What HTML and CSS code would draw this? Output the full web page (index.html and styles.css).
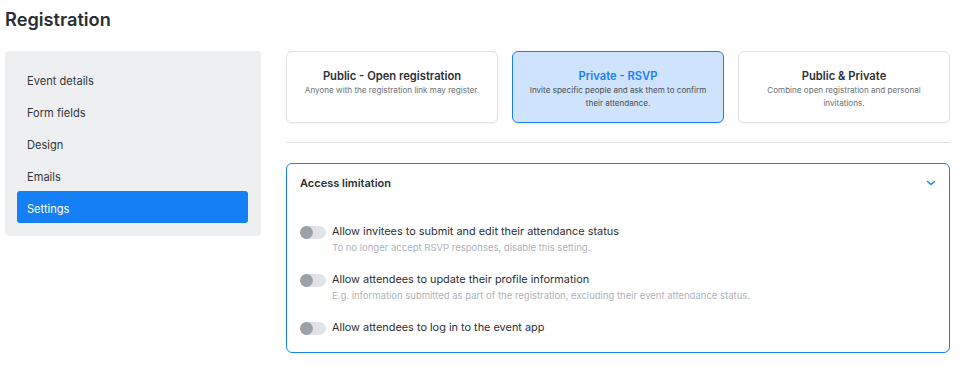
FILE: index.html
```html
<!DOCTYPE html>
<html>
<head>
<meta charset="utf-8">
<link rel="stylesheet" href="styles.css">
</head>
<body>
<h1 class="page-title">Registration</h1>
<div class="layout">
  <nav class="sidebar">
    <div class="nav-item">Event details</div>
    <div class="nav-item">Form fields</div>
    <div class="nav-item">Design</div>
    <div class="nav-item">Emails</div>
    <div class="nav-item active">Settings</div>
  </nav>
  <main class="content">
    <div class="cards">
      <div class="card">
        <div class="card-title">Public - Open registration</div>
        <div class="card-sub">Anyone with the registration link may register.</div>
      </div>
      <div class="card selected">
        <div class="card-title">Private - RSVP</div>
        <div class="card-sub">Invite specific people and ask them to confirm their attendance.</div>
      </div>
      <div class="card">
        <div class="card-title">Public &amp; Private</div>
        <div class="card-sub">Combine open registration and personal invitations.</div>
      </div>
    </div>
    <hr class="divider">
    <section class="panel">
      <div class="panel-header">
        <span>Access limitation</span>
        <svg class="chevron" width="10" height="6" viewBox="0 0 10 6"><path d="M1.5 1.5 L5 4.5 L8.5 1.5" fill="none" stroke="#1a7ff5" stroke-width="1.4" stroke-linecap="round" stroke-linejoin="round"/></svg>
      </div>
      <div class="panel-body">
        <div class="setting">
          <span class="toggle"><span class="knob"></span></span>
          <div class="setting-text">
            <div class="setting-label">Allow invitees to submit and edit their attendance status</div>
            <div class="setting-sub">To no longer accept RSVP responses, disable this setting.</div>
          </div>
        </div>
        <div class="setting">
          <span class="toggle"><span class="knob"></span></span>
          <div class="setting-text">
            <div class="setting-label">Allow attendees to update their profile information</div>
            <div class="setting-sub">E.g. information submitted as part of the registration, excluding their event attendance status.</div>
          </div>
        </div>
        <div class="setting">
          <span class="toggle"><span class="knob"></span></span>
          <div class="setting-text">
            <div class="setting-label">Allow attendees to log in to the event app</div>
          </div>
        </div>
      </div>
    </section>
  </main>
</div>
</body>
</html>
```
FILE: styles.css
```css
* { box-sizing: border-box; }
body {
  margin: 0;
  padding: 0 13px 0 5px;
  font-family: Inter, "Noto Sans", "Liberation Sans", sans-serif;
  color: #2c3035;
  background: #fff;
}
.page-title {
  margin: 0;
  height: 51px;
  padding-top: 8px;
  font-size: 18.2px;
  line-height: 22px;
  font-weight: 600;
  color: #2a2e33;
}
.layout {
  display: flex;
  align-items: flex-start;
  gap: 25px;
}
.sidebar {
  width: 256px;
  flex: none;
  background: #eeeff1;
  border-radius: 4px;
  padding: 12px 13px 13px 12px;
}
.nav-item {
  height: 32px;
  line-height: 28px;
  padding: 4px 0 0 10px;
  font-size: 11.1px;
  color: #33373c;
  border-radius: 3px;
}
.nav-item.active {
  background: #1580f6;
  color: #fff;
}
.content {
  flex: 1;
  min-width: 0;
}
.cards {
  display: grid;
  grid-template-columns: repeat(3, 1fr);
  gap: 14px;
}
.card {
  height: 72px;
  border: 1px solid #e2e3e6;
  border-radius: 6px;
  box-shadow: 0 1px 2px rgba(0,0,0,0.06);
  padding: 16px 16px 0;
  text-align: center;
  background: #fff;
}
.card.selected {
  background: #cfe3fc;
  border-color: #1a7ff5;
}
.card-title {
  font-size: 11.2px;
  line-height: 16px;
  font-weight: 600;
  color: #2c3035;
}
.card.selected .card-title { color: #1a7ff5; }
.card-sub {
  font-size: 8.1px;
  line-height: 13px;
  color: #6b7076;
}
.card.selected .card-sub { color: #4a4f55; }
.divider {
  margin: 19px 0 20px;
  border: 0;
  border-top: 1px solid #e0e1e3;
  height: 0;
}
.panel {
  border: 1px solid #1a7ff5;
  border-radius: 6px;
  padding: 0 14px 17px 13px;
}
.panel-header {
  height: 38px;
  display: flex;
  align-items: center;
  justify-content: space-between;
  font-size: 11px;
  font-weight: 600;
  color: #2c3035;
}
.chevron { margin-right: -1px; margin-top: -1px; }
.panel-body {
  padding-top: 21px;
  display: flex;
  flex-direction: column;
  gap: 16px;
}
.setting {
  display: flex;
  align-items: flex-start;
  gap: 6px;
}
.toggle {
  flex: none;
  width: 26px;
  height: 13px;
  margin-top: 2.5px;
  border-radius: 7px;
  background: #e1e3e6;
  position: relative;
}
.knob {
  position: absolute;
  left: 0;
  top: 0;
  width: 13px;
  height: 13px;
  border-radius: 50%;
  background: #9ca1a8;
}
.setting-label {
  font-size: 10.9px;
  line-height: 16px;
  color: #2c3035;
}
.setting-sub {
  margin-top: 2px;
  font-size: 9.5px;
  line-height: 14px;
  color: #b0b4ba;
}
```
